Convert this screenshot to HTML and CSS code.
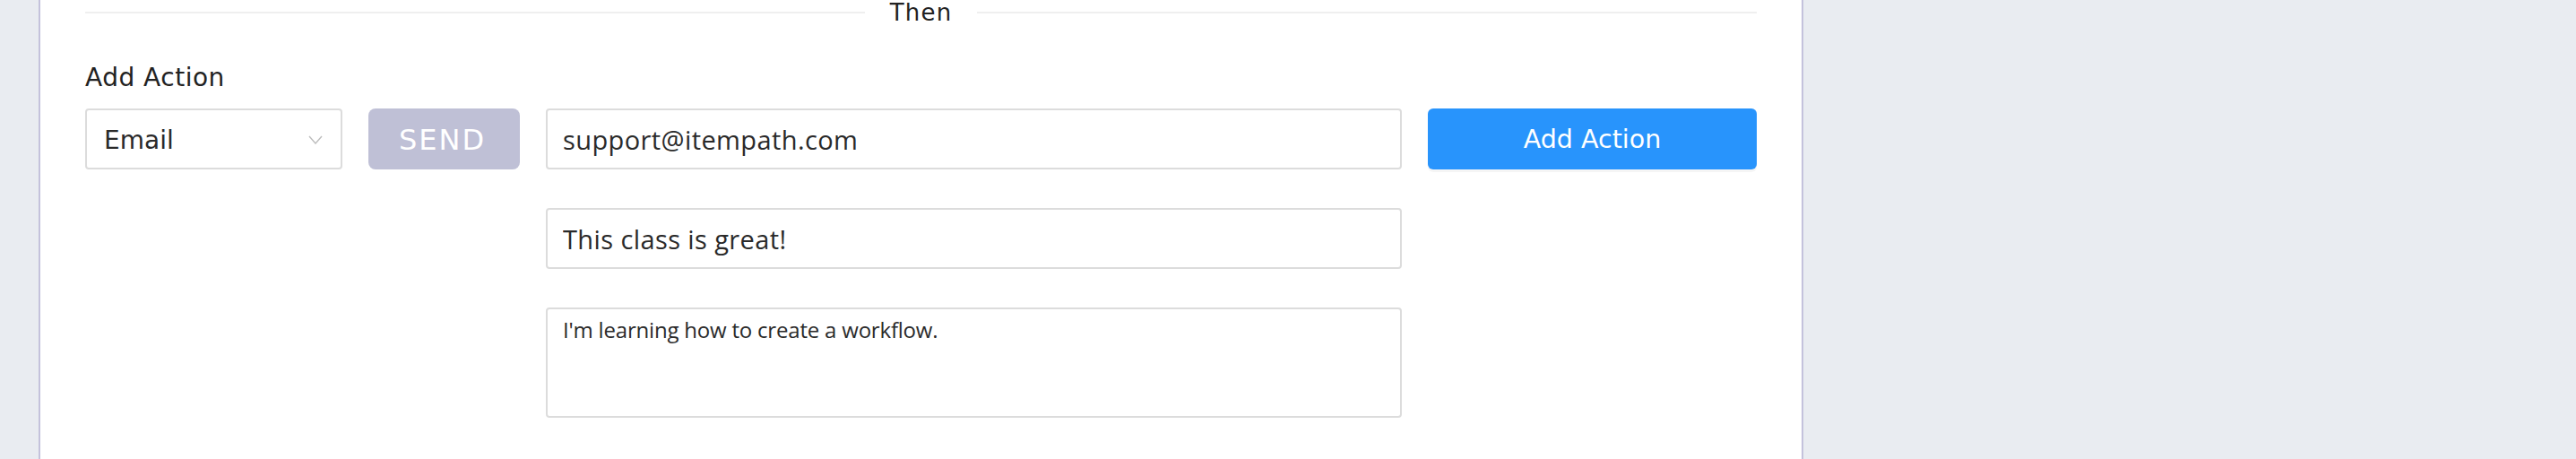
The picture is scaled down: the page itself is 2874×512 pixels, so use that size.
FILE: index.html
```html
<!DOCTYPE html>
<html lang="en">
<head>
    <meta charset="UTF-8">
    <meta name="viewport" content="width=device-width, initial-scale=1.0">
    <title>Workflow - Add Action</title>
    <link rel="stylesheet" href="styles.css">
</head>
<body>
    <div class="panel">
        <div class="divider">
            <span class="divider-text">Then</span>
        </div>

        <h3 class="section-title">Add Action</h3>

        <div class="action-form">
            <div class="select-box">
                <span>Email</span>
                <svg class="chevron" width="16" height="10" viewBox="0 0 16 10">
                    <polyline points="1,1 8,9 15,1" fill="none" stroke="#bdbdbd" stroke-width="1.4"/>
                </svg>
            </div>
            <button class="send-btn" disabled>SEND</button>
            <input class="field" type="text" value="support@itempath.com">
            <button class="add-btn">Add Action</button>

            <input class="field subject" type="text" value="This class is great!">
            <textarea class="field message">I'm learning how to create a workflow.</textarea>
        </div>
    </div>
</body>
</html>
```

FILE: styles.css
```css
body {
    margin: 0;
    background-color: #e9ecf1;
    font-family: "DejaVu Sans", Verdana, sans-serif;
    color: #222;
}

.panel {
    margin-left: 43px;
    width: 1865px;
    height: 512px;
    padding: 0 50px;
    background: white;
    border-left: 2px solid #c4c2dc;
    border-right: 2px solid #c4c2dc;
}

.divider {
    display: flex;
    align-items: center;
    gap: 28px;
    height: 28px;
}

.divider::before,
.divider::after {
    content: "";
    flex: 1;
    height: 2px;
    background-color: #efefef;
}

.divider-text {
    font-size: 26px;
    line-height: 28px;
    letter-spacing: 1.2px;
}

.section-title {
    margin: 42px 0 17px;
    font-size: 28px;
    font-weight: normal;
    line-height: 34px;
    letter-spacing: 0.5px;
}

.action-form {
    display: grid;
    grid-template-columns: 287px 169px 1fr 367px;
    column-gap: 29px;
    row-gap: 43px;
}

.select-box {
    display: flex;
    align-items: center;
    justify-content: space-between;
    height: 68px;
    box-sizing: border-box;
    padding: 2px 20px 0 19px;
    border: 2px solid #dcdcdc;
    border-radius: 4px;
    font-size: 28px;
    color: #2a2a2a;
}

.send-btn,
.add-btn {
    height: 68px;
    padding-top: 2px;
    border: none;
    font-family: inherit;
    color: white;
    cursor: pointer;
}

.send-btn {
    padding-left: 2px;
    background-color: #bfc0d6;
    border-radius: 8px;
    font-size: 32px;
    letter-spacing: 2px;
}

.add-btn {
    background-color: #2894fc;
    border-radius: 6px;
    font-size: 28.5px;
    box-shadow: 0 3px 0 rgba(0, 0, 0, 0.04);
}

.field {
    height: 68px;
    box-sizing: border-box;
    padding: 0 17px;
    border: 2px solid #dcdcdc;
    border-radius: 4px;
    font-family: "Open Sans", "Noto Sans", Arial, sans-serif;
    font-size: 29px;
    letter-spacing: 0.4px;
    color: #2a2a2a;
}

.subject,
.message {
    grid-column: 3;
}

.message {
    height: 123px;
    padding: 6px 17px;
    font-size: 24px;
    letter-spacing: -0.2px;
    resize: none;
}
```
